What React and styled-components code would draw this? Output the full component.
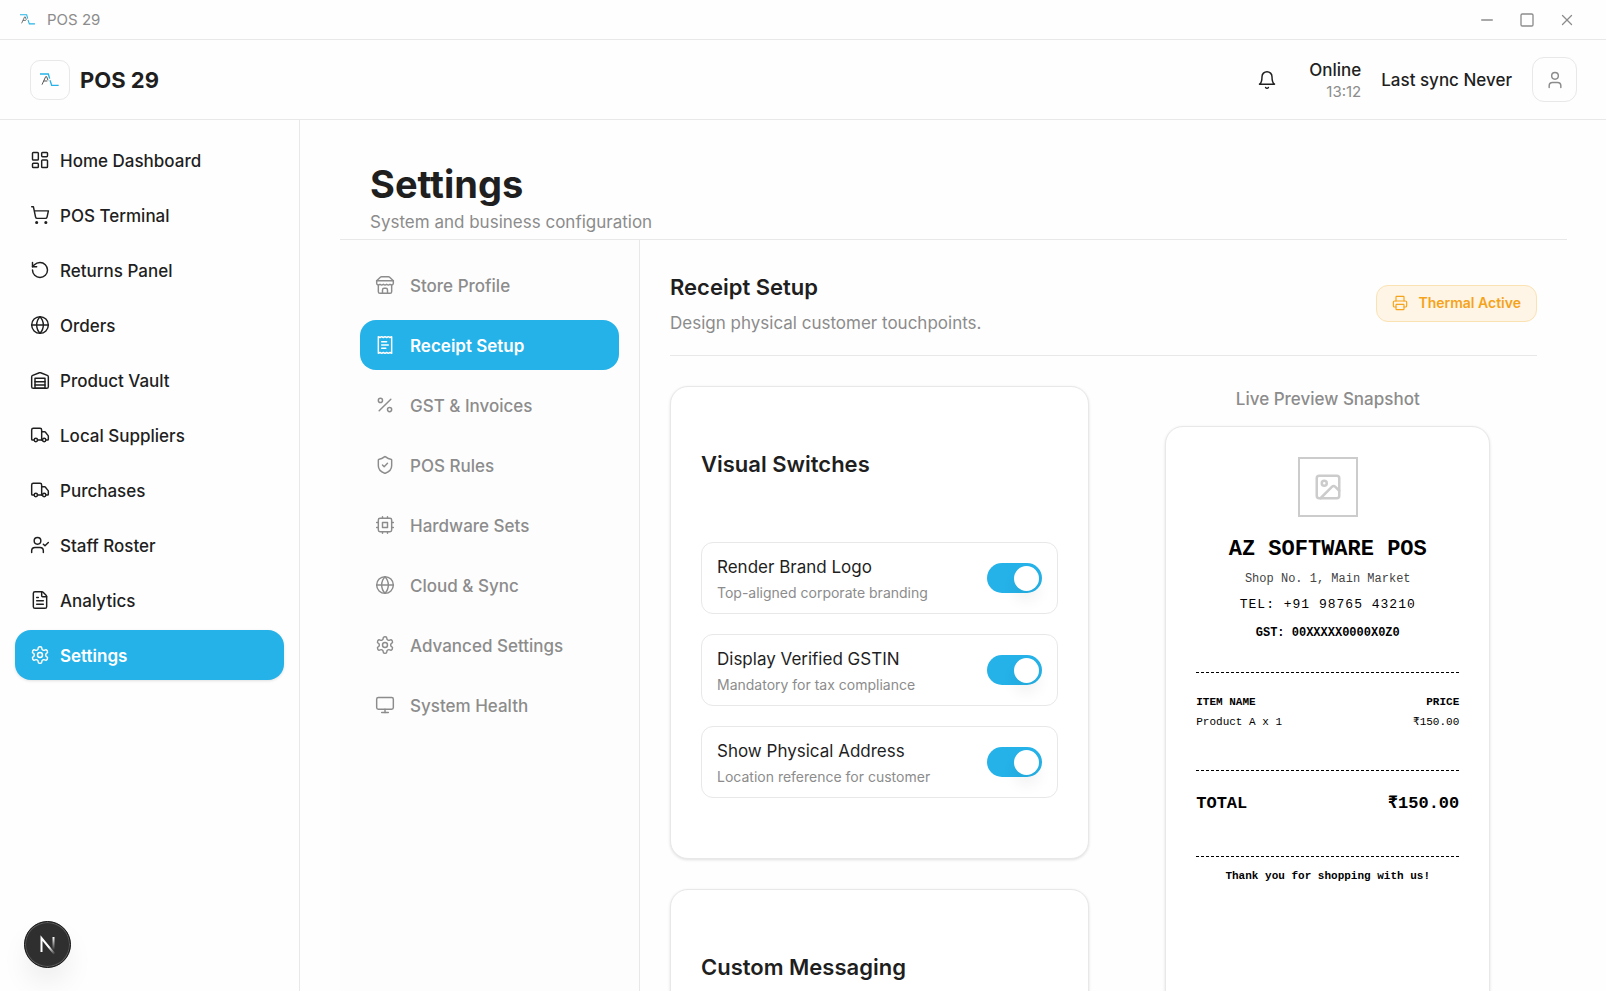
import React from 'react';
import styled, { createGlobalStyle } from 'styled-components';
import {
  createLucideIcon,
  FileText,
  Globe,
  Image,
  LayoutDashboard,
  Minus,
  Monitor,
  Percent,
  Printer,
  RotateCcw,
  ShieldCheck,
  ShoppingCart,
  Square,
  Truck,
  User,
  UserCheck,
  X,
} from 'lucide-react';

const GlobalStyle = createGlobalStyle`
  * {
    box-sizing: border-box;
  }
  body {
    margin: 0;
    background: #fefefe;
    color: #1f1f1f;
    font-family: Inter, "Liberation Sans", sans-serif;
    font-size: 17px;
    line-height: 26px;
  }
  h1, h2, h3, p {
    margin: 0;
  }
  button {
    font: inherit;
    color: inherit;
    background: none;
    border: none;
    padding: 0;
    cursor: pointer;
  }
`;

const Shell = styled.div`
  display: flex;
  flex-direction: column;
  height: 100vh;
  overflow: hidden;
`;

const TitleBar = styled.div`
  display: flex;
  align-items: center;
  justify-content: space-between;
  flex-shrink: 0;
  height: 40px;
  padding: 0 19px 0 20px;
  border-bottom: 1px solid #e8e8e8;
  color: #8c8c8c;
  font-size: 15px;
`;

const TitleBarName = styled.div`
  display: flex;
  align-items: center;
  gap: 11px;
`;

const WindowControls = styled.div`
  display: flex;
`;

const WindowButton = styled.button`
  display: flex;
  align-items: center;
  justify-content: center;
  width: 40px;
  height: 38px;
`;

const TopBar = styled.header`
  display: flex;
  align-items: center;
  justify-content: space-between;
  flex-shrink: 0;
  height: 80px;
  padding: 0 29px 0 30px;
  border-bottom: 1px solid #e8e8e8;
  font-weight: 500;
`;

const Brand = styled.div`
  display: flex;
  align-items: center;
  gap: 10px;
  font-size: 22px;
  font-weight: 700;
`;

const BrandMark = styled.div`
  display: flex;
  align-items: center;
  justify-content: center;
  width: 40px;
  height: 40px;
  border: 1px solid #e8e8e8;
  border-radius: 10px;
`;

const TopBarActions = styled.div`
  display: flex;
  align-items: center;
  gap: 20px;
`;

const SquareButton = styled.button`
  display: flex;
  align-items: center;
  justify-content: center;
  width: 45px;
  height: 45px;
  border: 1px solid ${({ $outlined }) => ($outlined ? '#e8e8e8' : 'transparent')};
  border-radius: 12px;
  color: ${({ $outlined }) => ($outlined ? '#8c8c8c' : '#1f1f1f')};
`;

const Status = styled.div`
  display: flex;
  flex-direction: column;
  align-items: flex-end;
  padding-top: 2px;
  line-height: 22px;
`;

const StatusTime = styled.span`
  font-size: 15px;
  font-weight: 400;
  color: #8c8c8c;
`;

const Body = styled.div`
  display: flex;
  flex: 1;
  min-height: 0;
`;

const Sidebar = styled.nav`
  display: flex;
  flex-direction: column;
  flex-shrink: 0;
  gap: 5px;
  width: 300px;
  padding: 15px;
  border-right: 1px solid #e8e8e8;
`;

const SidebarLink = styled.a`
  display: flex;
  align-items: center;
  gap: 10px;
  height: 50px;
  padding: 0 15px;
  border-radius: 16px;
  text-decoration: none;
  font-weight: ${({ $active }) => ($active ? 600 : 500)};
  color: ${({ $active }) => ($active ? '#ffffff' : '#1f1f1f')};
  background: ${({ $active }) => ($active ? '#25b2e8' : 'transparent')};
  box-shadow: ${({ $active }) => ($active ? '0 1px 3px rgba(0, 0, 0, 0.12)' : 'none')};
`;

const NavLabel = styled.span`
  padding-top: 2px;
`;

const Main = styled.main`
  display: flex;
  flex-direction: column;
  flex: 1;
  min-width: 0;
  padding: 40px 39px 0 40px;
`;

const PageHeader = styled.div`
  flex-shrink: 0;
  padding: 0 30px 4px;
  border-bottom: 1px solid #e8e8e8;
`;

const PageTitle = styled.h1`
  font-size: 38px;
  font-weight: 700;
  line-height: 49px;
`;

const Muted = styled.p`
  color: #8c8c8c;
`;

const Panel = styled.div`
  display: flex;
  flex: 1;
  min-height: 0;
`;

const SubNav = styled.nav`
  display: flex;
  flex-direction: column;
  flex-shrink: 0;
  gap: 10px;
  width: 300px;
  padding: 20px;
  background: #fdfdfd;
  border-right: 1px solid #e8e8e8;
`;

const SubNavButton = styled.button`
  display: flex;
  align-items: center;
  gap: 15px;
  height: 50px;
  padding: 0 15px;
  border-radius: 16px;
  font-weight: ${({ $active }) => ($active ? 600 : 500)};
  color: ${({ $active }) => ($active ? '#ffffff' : '#8c8c8c')};
  background: ${({ $active }) => ($active ? '#25b2e8' : 'transparent')};
`;

const Content = styled.section`
  flex: 1;
  min-width: 0;
  padding: 30px 30px 0;
  overflow: hidden;
`;

const SectionHeader = styled.div`
  display: flex;
  align-items: center;
  justify-content: space-between;
  padding-bottom: 19px;
  margin-bottom: 30px;
  border-bottom: 1px solid #e8e8e8;
`;

const SectionTitle = styled.h2`
  margin-bottom: 6px;
  font-size: 22px;
  font-weight: 600;
  line-height: 34px;
`;

const Badge = styled.span`
  display: flex;
  align-items: center;
  gap: 10px;
  height: 37px;
  padding: 0 15px;
  border: 1px solid #fbe2b3;
  border-radius: 12px;
  background: #fef5e6;
  color: #f5a31a;
  font-size: 14px;
  font-weight: 600;
`;

const Columns = styled.div`
  display: grid;
  grid-template-columns: 1fr 1fr;
  gap: 30px;
`;

const CardStack = styled.div`
  display: flex;
  flex-direction: column;
  gap: 30px;
`;

const Card = styled.div`
  padding: 60px 30px;
  min-height: 300px;
  border: 1px solid #e8e8e8;
  border-radius: 18px;
  background: #ffffff;
  box-shadow: 0 1px 3px rgba(0, 0, 0, 0.12);
`;

const CardTitle = styled.h3`
  margin-bottom: 60px;
  font-size: 22px;
  font-weight: 600;
  line-height: 35px;
`;

const SwitchList = styled.div`
  display: flex;
  flex-direction: column;
  gap: 20px;
`;

const SwitchRow = styled.label`
  display: flex;
  align-items: center;
  justify-content: space-between;
  padding: 10px 15px;
  border: 1px solid #e8e8e8;
  border-radius: 12px;
  cursor: pointer;
`;

const SwitchText = styled.span`
  display: flex;
  flex-direction: column;
  padding-top: 1px;
  gap: 2px;
`;

const SwitchHint = styled.span`
  font-size: 14px;
  line-height: 21px;
  color: #8c8c8c;
`;

const Switch = styled.input`
  appearance: none;
  display: flex;
  flex-shrink: 0;
  align-items: center;
  justify-content: flex-start;
  width: 55px;
  height: 30px;
  margin: 0;
  padding: 0 3px;
  border-radius: 15px;
  background: #d9d9d9;
  cursor: pointer;

  &::before {
    content: "";
    width: 25px;
    height: 25px;
    border-radius: 50%;
    background: #ffffff;
    box-shadow: 0 10px 15px rgba(0, 0, 0, 0.06);
  }

  &:checked {
    justify-content: flex-end;
    background: #25b2e8;
  }
`;

const Preview = styled.div`
  display: flex;
  flex-direction: column;
  align-items: center;
  gap: 14px;
  color: #8c8c8c;
  font-weight: 500;
`;

const Receipt = styled.div`
  display: flex;
  flex-direction: column;
  align-items: center;
  width: 100%;
  max-width: 325px;
  min-height: 625px;
  padding: 30px;
  border: 1px solid #e8e8e8;
  border-radius: 18px;
  background: #ffffff;
  box-shadow: 0 1px 3px rgba(0, 0, 0, 0.12);
  color: #000000;
  font-family: "Liberation Mono", monospace;
  font-size: 12px;
  font-weight: 400;
  line-height: 18px;
`;

const ReceiptLogo = styled.div`
  display: flex;
  align-items: center;
  justify-content: center;
  width: 60px;
  height: 60px;
  margin-bottom: 16px;
  border: 2px solid #cccccc;
  color: #cccccc;
`;

const ReceiptName = styled.h3`
  font-size: 22px;
  font-weight: 700;
  line-height: 33px;
`;

const ReceiptAddress = styled.p`
  padding: 4px 0;
  color: #444444;
`;

const ReceiptPhone = styled.p`
  padding: 4px 0;
  font-size: 13px;
  letter-spacing: 1px;
`;

const ReceiptTax = styled.p`
  padding: 6px 0 30px;
  font-weight: 700;
`;

const ReceiptTable = styled.table`
  width: 100%;
  border-spacing: 0;
  border-top: 1px dashed #000000;
  font-size: 11px;
  line-height: 20px;

  th, td {
    padding: 0;
    text-align: left;
  }
  th:last-child, td:last-child {
    text-align: right;
  }
  th {
    padding-top: 19px;
  }
  td {
    padding-bottom: 38px;
  }
`;

const ReceiptTotal = styled.div`
  display: flex;
  justify-content: space-between;
  width: 100%;
  padding: 20px 0 39px;
  border-top: 1px dashed #000000;
  font-size: 17px;
  font-weight: 700;
  line-height: 26px;
`;

const ReceiptFooter = styled.p`
  width: 100%;
  padding-top: 10px;
  border-top: 1px dashed #000000;
  text-align: center;
  font-size: 11px;
  font-weight: 700;
`;

const DevButton = styled.button`
  position: fixed;
  left: 24px;
  bottom: 23px;
  display: flex;
  align-items: center;
  justify-content: center;
  width: 47px;
  height: 47px;
  border: 1px solid #111111;
  border-radius: 50%;
  background: #2f2f2f;
  box-shadow: inset 0 0 0 1px #5a5a5a, 0 16px 32px -8px rgba(0, 0, 0, 0.14);
`;

const icon = (name, ...paths) =>
  createLucideIcon(name, paths.map((d) => ['path', { d, key: d }]));

const BellIcon = icon(
  'bell-classic',
  'M6 8a6 6 0 0 1 12 0c0 7 3 9 3 9H3s3-2 3-9',
  'M10.3 21a1.94 1.94 0 0 0 3.4 0'
);

const WarehouseIcon = icon(
  'warehouse-classic',
  'M22 8.35V20a2 2 0 0 1-2 2H4a2 2 0 0 1-2-2V8.35A2 2 0 0 1 3.26 6.5l8-3.2a2 2 0 0 1 1.48 0l8 3.2A2 2 0 0 1 22 8.35Z',
  'M6 18h12',
  'M6 14h12',
  'M6 10h12v12H6z'
);

const GearIcon = icon(
  'gear',
  'M12.22 2h-.44a2 2 0 0 0-2 2v.18a2 2 0 0 1-1 1.73l-.43.25a2 2 0 0 1-2 0l-.15-.08a2 2 0 0 0-2.73.73l-.22.38a2 2 0 0 0 .73 2.73l.15.1a2 2 0 0 1 1 1.72v.51a2 2 0 0 1-1 1.74l-.15.09a2 2 0 0 0-.73 2.73l.22.38a2 2 0 0 0 2.73.73l.15-.08a2 2 0 0 1 2 0l.43.25a2 2 0 0 1 1 1.73V20a2 2 0 0 0 2 2h.44a2 2 0 0 0 2-2v-.18a2 2 0 0 1 1-1.73l.43-.25a2 2 0 0 1 2 0l.15.08a2 2 0 0 0 2.73-.73l.22-.39a2 2 0 0 0-.73-2.73l-.15-.08a2 2 0 0 1-1-1.74v-.5a2 2 0 0 1 1-1.74l.15-.09a2 2 0 0 0 .73-2.73l-.22-.38a2 2 0 0 0-2.73-.73l-.15.08a2 2 0 0 1-2 0l-.43-.25a2 2 0 0 1-1-1.73V4a2 2 0 0 0-2-2z',
  'M15 12a3 3 0 1 1-6 0 3 3 0 0 1 6 0z'
);

const StoreIcon = icon(
  'store-classic',
  'm2 7 4.41-4.41A2 2 0 0 1 7.83 2h8.34a2 2 0 0 1 1.42.59L22 7',
  'M4 12v8a2 2 0 0 0 2 2h12a2 2 0 0 0 2-2v-8',
  'M15 22v-4a2 2 0 0 0-2-2h-2a2 2 0 0 0-2 2v4',
  'M2 7h20',
  'M22 7v3a2 2 0 0 1-2 2a2.7 2.7 0 0 1-1.59-.63.7.7 0 0 0-.82 0A2.7 2.7 0 0 1 16 12a2.7 2.7 0 0 1-1.59-.63.7.7 0 0 0-.82 0A2.7 2.7 0 0 1 12 12a2.7 2.7 0 0 1-1.59-.63.7.7 0 0 0-.82 0A2.7 2.7 0 0 1 8 12a2.7 2.7 0 0 1-1.59-.63.7.7 0 0 0-.82 0A2.7 2.7 0 0 1 4 12a2 2 0 0 1-2-2V7'
);

const ReceiptIcon = icon(
  'receipt-classic',
  'M4 2v20l2-1 2 1 2-1 2 1 2-1 2 1 2-1 2 1V2l-2 1-2-1-2 1-2-1-2 1-2-1-2 1Z',
  'M14 8H8',
  'M16 12H8',
  'M13 16H8'
);

const ChipIcon = icon(
  'chip',
  'M6 4h12a2 2 0 0 1 2 2v12a2 2 0 0 1-2 2H6a2 2 0 0 1-2-2V6a2 2 0 0 1 2-2z',
  'M9 9h6v6H9z',
  'M15 2v2M15 20v2M2 15h2M2 9h2M20 15h2M20 9h2M9 2v2M9 20v2'
);

const menu = [
  { label: 'Home Dashboard', icon: LayoutDashboard },
  { label: 'POS Terminal', icon: ShoppingCart },
  { label: 'Returns Panel', icon: RotateCcw },
  { label: 'Orders', icon: Globe },
  { label: 'Product Vault', icon: WarehouseIcon },
  { label: 'Local Suppliers', icon: Truck },
  { label: 'Purchases', icon: Truck },
  { label: 'Staff Roster', icon: UserCheck },
  { label: 'Analytics', icon: FileText },
  { label: 'Settings', icon: GearIcon },
];

const sections = [
  { label: 'Store Profile', icon: StoreIcon },
  { label: 'Receipt Setup', icon: ReceiptIcon },
  { label: 'GST & Invoices', icon: Percent },
  { label: 'POS Rules', icon: ShieldCheck },
  { label: 'Hardware Sets', icon: ChipIcon },
  { label: 'Cloud & Sync', icon: Globe },
  { label: 'Advanced Settings', icon: GearIcon },
  { label: 'System Health', icon: Monitor },
];

const switches = [
  { id: 'logo', label: 'Render Brand Logo', hint: 'Top-aligned corporate branding' },
  { id: 'gstin', label: 'Display Verified GSTIN', hint: 'Mandatory for tax compliance' },
  { id: 'address', label: 'Show Physical Address', hint: 'Location reference for customer' },
];

const Logo = ({ width }) => (
  <svg width={width} viewBox="0 0 60 40" fill="none" aria-hidden="true">
    <path d="M6 35L17 11H20L24 22M11 24H22" stroke="#555555" strokeWidth="3" />
    <path d="M0 3H25L29 17M30 22L35 37H56" stroke="#25b2e8" strokeWidth="4" />
  </svg>
);

const NextMark = () => (
  <svg width="18" height="20" viewBox="0 0 18 20" fill="none" aria-hidden="true">
    <defs>
      <linearGradient id="stem" x1="0" y1="2" x2="0" y2="15" gradientUnits="userSpaceOnUse">
        <stop stopColor="#ffffff" />
        <stop offset="1" stopColor="#ffffff" stopOpacity="0" />
      </linearGradient>
      <linearGradient id="slash" x1="10" y1="12" x2="16" y2="19" gradientUnits="userSpaceOnUse">
        <stop stopColor="#ffffff" />
        <stop offset="1" stopColor="#ffffff" stopOpacity="0" />
      </linearGradient>
    </defs>
    <path d="M2.5 17V3L15.5 19" stroke="url(#slash)" strokeWidth="2" />
    <path d="M14.5 2V15" stroke="url(#stem)" strokeWidth="2" />
  </svg>
);

class App extends React.Component {
  constructor(props) {
    super(props);
    this.state = {
      section: 'Receipt Setup',
      logo: true,
      gstin: true,
      address: true,
    };
  }

  toggle(field) {
    this.setState({ [field]: !this.state[field] });
  }

  renderReceipt() {
    return (
      <Receipt>
        {this.state.logo && (
          <ReceiptLogo>
            <Image size={30} />
          </ReceiptLogo>
        )}
        <ReceiptName>AZ SOFTWARE POS</ReceiptName>
        {this.state.address && <ReceiptAddress>Shop No. 1, Main Market</ReceiptAddress>}
        <ReceiptPhone>TEL: +91 98765 43210</ReceiptPhone>
        {this.state.gstin && <ReceiptTax>GST: 00XXXXX0000X0Z0</ReceiptTax>}
        <ReceiptTable>
          <thead>
            <tr>
              <th>ITEM NAME</th>
              <th>PRICE</th>
            </tr>
          </thead>
          <tbody>
            <tr>
              <td>Product A x 1</td>
              <td>₹150.00</td>
            </tr>
          </tbody>
        </ReceiptTable>
        <ReceiptTotal>
          <span>TOTAL</span>
          <span>₹150.00</span>
        </ReceiptTotal>
        <ReceiptFooter>Thank you for shopping with us!</ReceiptFooter>
      </Receipt>
    );
  }

  render() {
    return (
      <>
        <GlobalStyle />
        <Shell>
          <TitleBar>
            <TitleBarName>
              <Logo width={16} />
              POS 29
            </TitleBarName>
            <WindowControls>
              <WindowButton aria-label="Minimize"><Minus size={18} /></WindowButton>
              <WindowButton aria-label="Maximize"><Square size={16} /></WindowButton>
              <WindowButton aria-label="Close"><X size={18} strokeWidth={1.75} /></WindowButton>
            </WindowControls>
          </TitleBar>

          <TopBar>
            <Brand>
              <BrandMark>
                <Logo width={20} />
              </BrandMark>
              POS 29
            </Brand>
            <TopBarActions>
              <SquareButton aria-label="Notifications"><BellIcon size={20} strokeWidth={1.75} /></SquareButton>
              <Status>
                <span>Online</span>
                <StatusTime>13:12</StatusTime>
              </Status>
              <span>Last sync Never</span>
              <SquareButton $outlined aria-label="Account"><User size={20} strokeWidth={1.75} /></SquareButton>
            </TopBarActions>
          </TopBar>

          <Body>
            <Sidebar>
              {menu.map(({ label, icon: Icon }) => (
                <SidebarLink key={label} href="#" $active={label === 'Settings'}>
                  <Icon size={20} strokeWidth={1.75} />
                  <NavLabel>{label}</NavLabel>
                </SidebarLink>
              ))}
            </Sidebar>

            <Main>
              <PageHeader>
                <PageTitle>Settings</PageTitle>
                <Muted>System and business configuration</Muted>
              </PageHeader>
              <Panel>
                <SubNav>
                  {sections.map(({ label, icon: Icon }) => (
                    <SubNavButton
                      key={label}
                      $active={label === this.state.section}
                      onClick={() => this.setState({ section: label })}
                    >
                      <Icon size={20} strokeWidth={1.75} />
                      <NavLabel>{label}</NavLabel>
                    </SubNavButton>
                  ))}
                </SubNav>

                <Content>
                  <SectionHeader>
                    <div>
                      <SectionTitle>Receipt Setup</SectionTitle>
                      <Muted>Design physical customer touchpoints.</Muted>
                    </div>
                    <Badge>
                      <Printer size={16} strokeWidth={1.75} />
                      Thermal Active
                    </Badge>
                  </SectionHeader>

                  <Columns>
                    <CardStack>
                      <Card>
                        <CardTitle>Visual Switches</CardTitle>
                        <SwitchList>
                          {switches.map(({ id, label, hint }) => (
                            <SwitchRow key={id} htmlFor={id}>
                              <SwitchText>
                                {label}
                                <SwitchHint>{hint}</SwitchHint>
                              </SwitchText>
                              <Switch
                                type="checkbox"
                                id={id}
                                checked={this.state[id]}
                                onChange={() => this.toggle(id)}
                              />
                            </SwitchRow>
                          ))}
                        </SwitchList>
                      </Card>
                      <Card>
                        <CardTitle>Custom Messaging</CardTitle>
                      </Card>
                    </CardStack>
                    <Preview>
                      Live Preview Snapshot
                      {this.renderReceipt()}
                    </Preview>
                  </Columns>
                </Content>
              </Panel>
            </Main>
          </Body>
        </Shell>

        <DevButton aria-label="Open dev tools">
          <NextMark />
        </DevButton>
      </>
    );
  }
}

export default App;
